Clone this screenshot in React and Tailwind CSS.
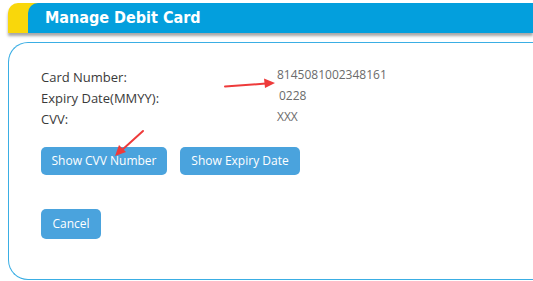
import React from "react";

export default function App() {
  // Card details rows
  const rows = [
    { label: "Card Number:", value: "8145081002348161", shift: "" },
    { label: "Expiry Date(MMYY):", value: "0228", shift: "pl-[2px]" },
    { label: "CVV:", value: "XXX", shift: "" },
  ];

  return (
    <div className="relative w-[533px] h-[281px] overflow-hidden bg-white font-['Open_Sans',sans-serif]">
      {/* Header */}
      <div className="mt-[3px] ml-2 flex h-[30px] rounded-tl-[10px] bg-[#f9d70b] shadow-[0_3px_3px_rgba(0,0,0,0.35)]">
        <div className="ml-[20px] flex flex-1 items-center rounded-tl-[10px] bg-[#039fdd] pl-[17px]">
          <h1 className="font-['DejaVu_Sans_Condensed','DejaVu_Sans',sans-serif] text-[16px] font-bold text-white">
            Manage Debit Card
          </h1>
        </div>
      </div>

      {/* Card */}
      <div className="mt-[9px] ml-2 h-[238px] rounded-l-[20px] border border-r-0 border-[#3aaee4] pl-[32px] pt-[24px]">
        <div className="grid grid-cols-[236px_auto]">
          {rows.map((row) => (
            <React.Fragment key={row.label}>
              <span className="text-[13px] leading-[21px] text-[#3a3a3a]">{row.label}</span>
              <span className={`-mt-[3px] text-[12px] leading-[21px] text-[#6b6b6b] ${row.shift}`}>
                {row.value}
              </span>
            </React.Fragment>
          ))}
        </div>

        <div className="mt-[17px] flex gap-[13px]">
          <button className="h-[28px] w-[126px] rounded-[5px] bg-[#4aa3dd] text-[12px] text-white">
            Show CVV Number
          </button>
          <button className="h-[28px] w-[120px] rounded-[5px] bg-[#4aa3dd] text-[12px] text-white">
            Show Expiry Date
          </button>
        </div>

        <button className="mt-[34px] h-[30px] w-[60px] rounded-[5px] bg-[#4aa3dd] text-[12px] text-white">
          Cancel
        </button>
      </div>

      {/* Red annotation arrows */}
      <svg className="absolute left-0 top-0 pointer-events-none" width="533" height="281">
        <g stroke="#ee3b3b" strokeWidth="2" strokeLinecap="round" fill="#ee3b3b">
          <line x1="225" y1="86.5" x2="266" y2="83.5" />
          <polygon points="275,83 264,78.5 265,88" stroke="none" />
          <line x1="143" y1="131" x2="122" y2="150" />
          <polygon points="115,156 119,145 126,152" stroke="none" />
        </g>
      </svg>
    </div>
  );
}
